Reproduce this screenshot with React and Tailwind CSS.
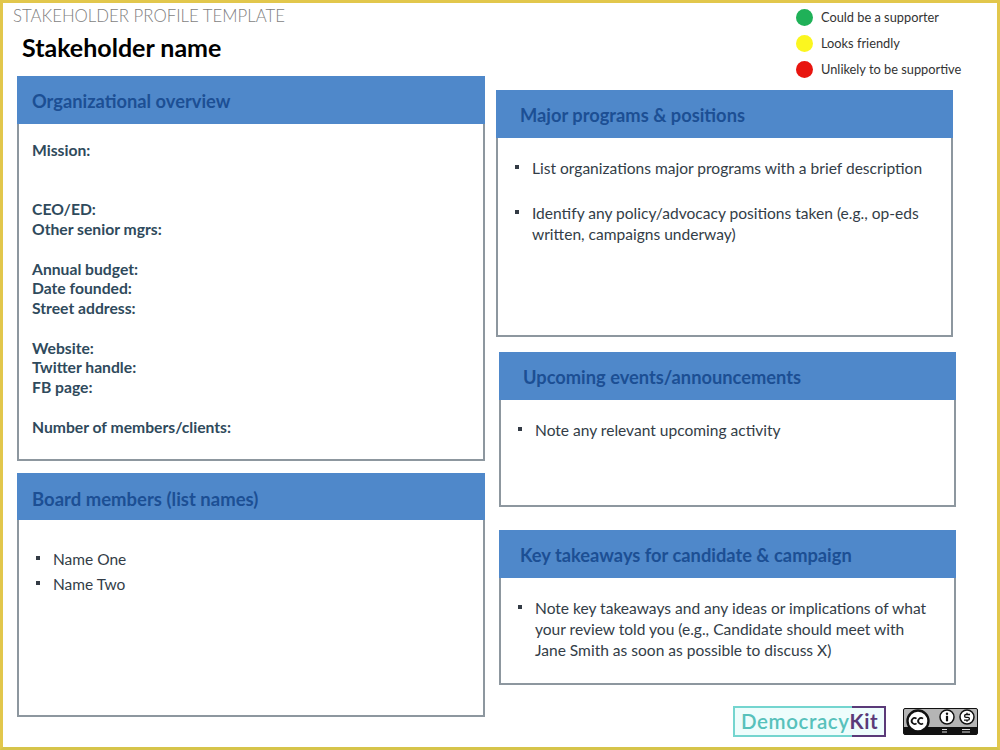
const font = { fontFamily: '"Lato", "Liberation Sans", sans-serif' };

function Panel({ title, className, titleClass = "h-[48px] pt-[4px] pl-[24px]", bodyClass, children }) {
  return (
    <section className={`flex flex-col border-2 border-[#8d979f] bg-white ${className}`}>
      <h2 className={`flex shrink-0 items-center bg-[#4f88ca] -mx-[2px] -mt-[2px] text-[18.3px] font-bold text-[#1c4f94] ${titleClass}`}>
        {title}
      </h2>
      <div className={bodyClass}>{children}</div>
    </section>
  );
}

function Bullet({ children, className = "" }) {
  return (
    <li className={`flex ${className}`}>
      <span className="mt-[7px] h-[4px] w-[4px] shrink-0 bg-[#333b45]" />
      <span className="ml-[13px]">{children}</span>
    </li>
  );
}

const overview = [
  "Mission:", "", "", "CEO/ED:", "Other senior mgrs:", "", "Annual budget:", "Date founded:",
  "Street address:", "", "Website:", "Twitter handle:", "FB page:", "", "Number of members/clients:",
];

const legend = [
  ["bg-[#1fb158]", "Could be a supporter"],
  ["bg-[#fbf61f]", "Looks friendly"],
  ["bg-[#e8150f]", "Unlikely to be supportive"],
];

function CCBadge() {
  return (
    <svg width="75" height="27" viewBox="0 0 75 27" aria-hidden="true">
      <rect x="0.5" y="0.5" width="74" height="26" rx="1.5" fill="#b5b5b5" stroke="#111" />
      <path d="M1 19H74V25.5a1 1 0 0 1-1 1H2a1 1 0 0 1-1-1Z" fill="#111" />
      <circle cx="15" cy="13" r="10.5" fill="#fff" stroke="#111" strokeWidth="2.4" />
      <path d="M13.5 10.6a3 3 0 1 0 0 4.8M20 10.6a3 3 0 1 0 0 4.8" fill="none" stroke="#111" strokeWidth="1.8" />
      <circle cx="44" cy="9" r="7" fill="#fff" stroke="#111" strokeWidth="1.5" />
      <circle cx="44" cy="5.8" r="1.2" fill="#111" />
      <path d="M44 7.8v5.5" stroke="#111" strokeWidth="2.2" />
      <circle cx="64" cy="9" r="7" fill="#fff" stroke="#111" strokeWidth="1.5" />
      <path d="M67 6.5h-4a1.4 1.4 0 0 0 0 2.8h2a1.4 1.4 0 0 1 0 2.8h-4M64 4.8v1.8M64 12v1.8" fill="none" stroke="#111" strokeWidth="1.3" />
      <path d="M39 21.5h5M39 24h5M59 21.5h8M59 24h8" stroke="#ddd" strokeWidth="1" />
    </svg>
  );
}

export default function App() {
  return (
    <div style={font} className="flex h-[750px] w-[1000px] flex-col border-[3px] border-[#e2c74c] border-b-[#d6c44a] bg-white text-[#333d47]">
      <div className="flex h-[73px] shrink-0">
        <div className="w-[793px] pl-[10px]">
          <p className="text-[16.8px] font-light leading-[25px] text-[#7f7f7f]">STAKEHOLDER PROFILE TEMPLATE</p>
          <h1 className="mt-[4px] pl-[9px] text-[25px] font-bold leading-[30px] text-black">Stakeholder name</h1>
        </div>
        <ul className="flex flex-col gap-[6.6px] pt-[5px] text-[12.8px] text-[#333]">
          {legend.map(([color, label]) => (
            <li key={label} className="flex h-[20px] items-center">
              <span className={`h-[17px] w-[17px] rounded-full ${color}`} />
              <span className="ml-[8px]">{label}</span>
            </li>
          ))}
        </ul>
      </div>

      <div className="flex">
        <div className="ml-[14px] flex w-[468px] shrink-0 flex-col gap-[12px]">
          <Panel title="Organizational overview" titleClass="h-[48px] pt-[4px] pl-[15px]" className="h-[385px]" bodyClass="px-[13px] pt-[17px] text-[15.7px] font-bold leading-[19.75px] text-[#2f4a5c]">
            {overview.map((line, i) => (
              <p key={i} className="h-[19.75px]">{line}</p>
            ))}
          </Panel>
          <Panel title="Board members (list names)" titleClass="h-[47px] pt-[6px] pl-[15px] text-[18.5px]" className="h-[244px]" bodyClass="pl-[17px] pt-[29px] text-[15.5px] text-[#333d47]">
            <ul className="flex flex-col gap-[5px] leading-[20px]">
              <Bullet>Name One</Bullet>
              <Bullet>Name Two</Bullet>
            </ul>
          </Panel>
        </div>

        <div className="ml-[11px] flex w-[485px] shrink-0 flex-col pt-[14px]">
          <Panel title="Major programs & positions" className="h-[247px] w-[457px]" bodyClass="pl-[17px] pr-[20px] pt-[20px] text-[15.55px] leading-[21px]">
            <ul className="flex flex-col gap-[24px]">
              <Bullet>List organizations major programs with a brief description</Bullet>
              <Bullet>Identify any policy/advocacy positions taken (e.g., op-eds written, campaigns underway)</Bullet>
            </ul>
          </Panel>
          <Panel title="Upcoming events/announcements" className="ml-[3px] mt-[15px] h-[155px] w-[457px]" bodyClass="pl-[17px] pr-[20px] pt-[20px] text-[15.55px] leading-[21px]">
            <ul>
              <Bullet>Note any relevant upcoming activity</Bullet>
            </ul>
          </Panel>
          <Panel title="Key takeaways for candidate & campaign" titleClass="h-[48px] pt-[4px] pl-[21px]" className="ml-[3px] mt-[23px] h-[155px] w-[457px]" bodyClass="pl-[17px] pr-[20px] pt-[20px] text-[15.55px] leading-[21px]">
            <ul>
              <Bullet>Note key takeaways and any ideas or implications of what your review told you (e.g., Candidate should meet with Jane Smith as soon as possible to discuss X)</Bullet>
            </ul>
          </Panel>
          <div className="ml-[237px] mt-[21px] flex items-center">
            <div className="relative flex h-[31px] w-[152px] items-center border-2 border-r-0 border-[#74d5cf] bg-[#eefdfc] pl-[6px] text-[20.5px] font-semibold tracking-[0.6px] text-[#57c1bb]">
              Democracy<span className="font-bold text-[#5a3a78]">Kit</span>
              <span className="absolute -right-px -top-[2px] -bottom-[2px] w-[34px] border-2 border-l-0 border-[#5a3a78]" />
            </div>
            <div className="ml-[18px]"><CCBadge /></div>
          </div>
        </div>
      </div>
    </div>
  );
}
